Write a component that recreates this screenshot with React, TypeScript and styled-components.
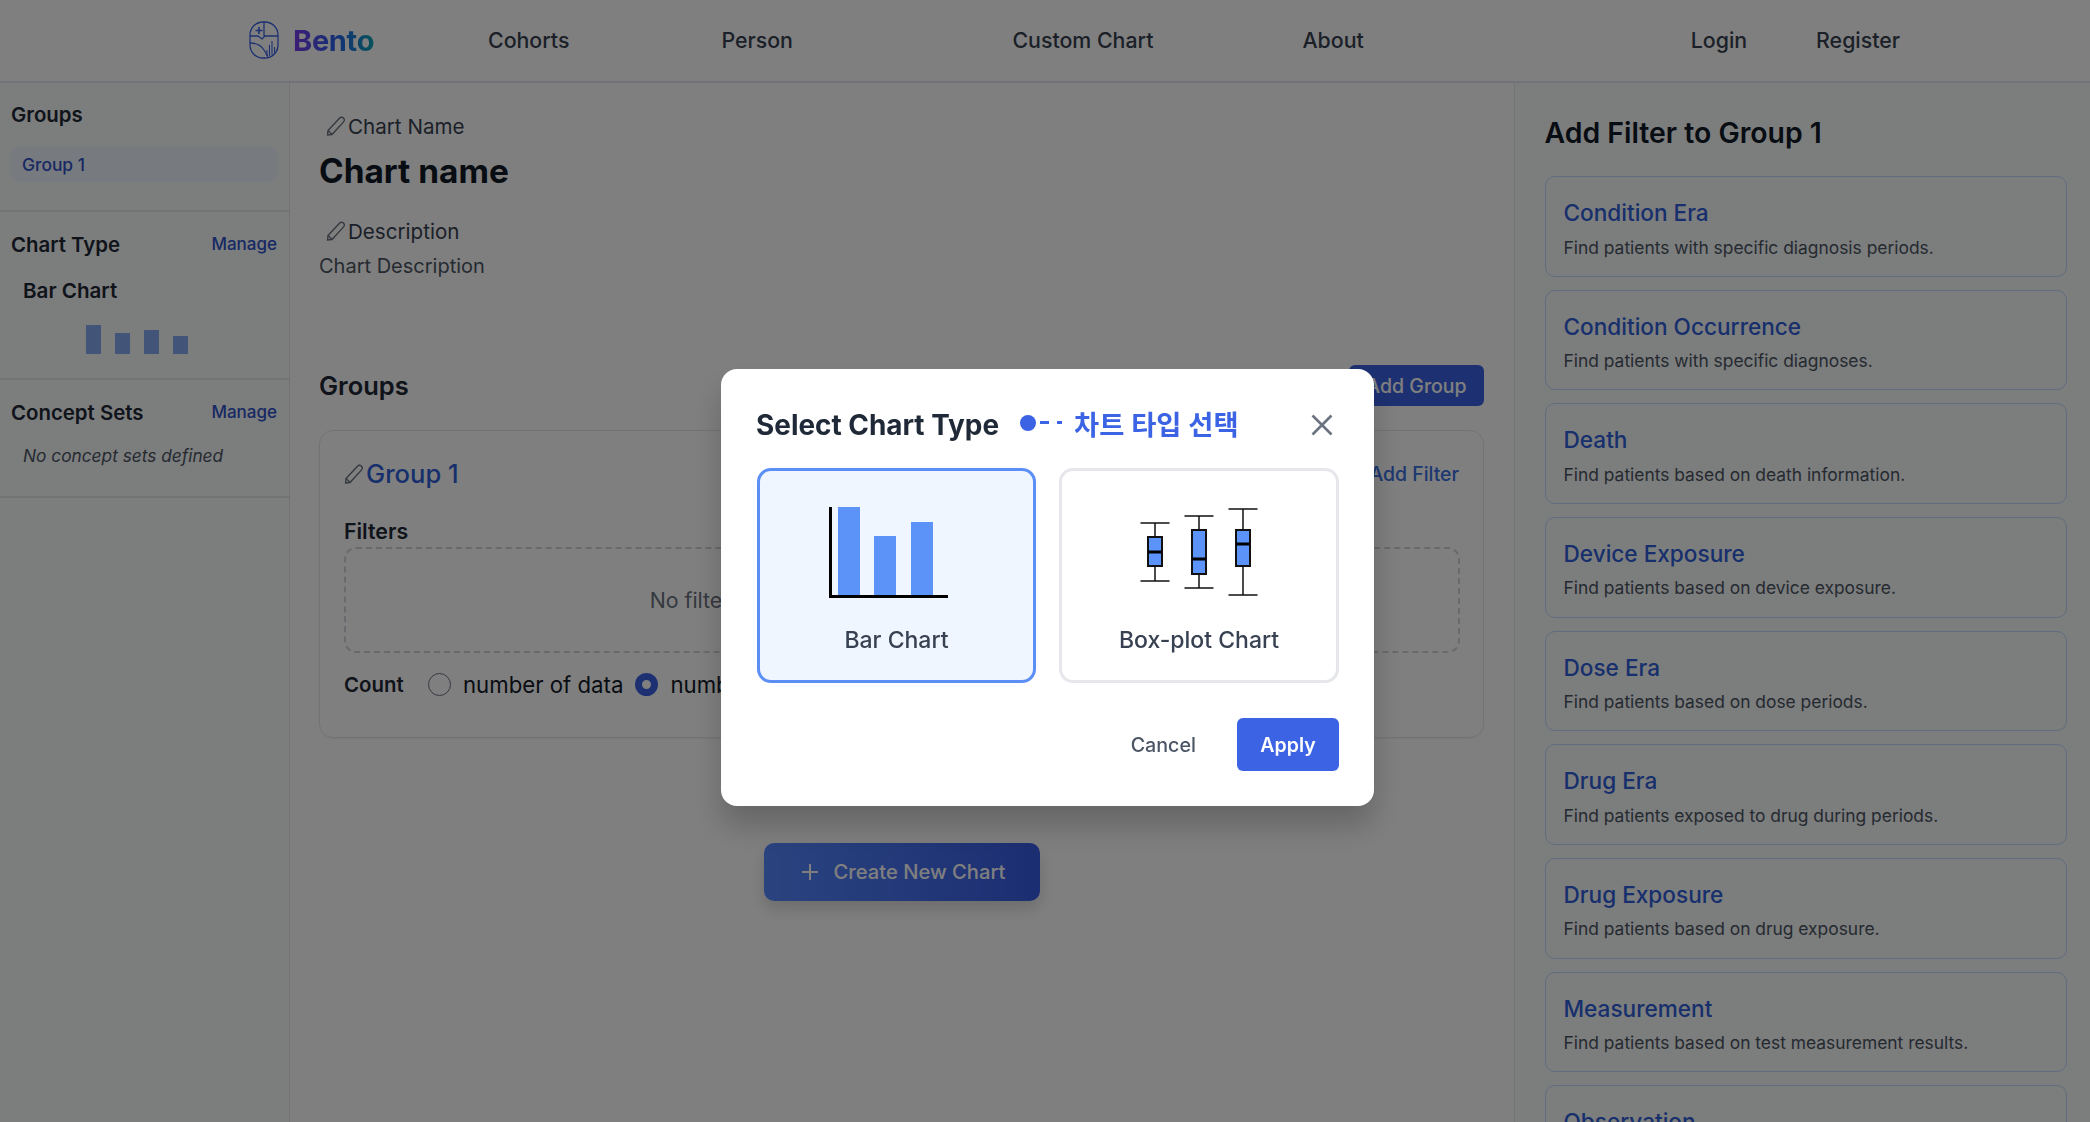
import React from "react";
import styled, { createGlobalStyle } from "styled-components";

const GlobalStyle = createGlobalStyle`
	* { box-sizing: border-box; }
	html, body { margin: 0; padding: 0; height: 100%; overflow: hidden; }
	body {
		font-family: Inter, "Noto Sans CJK KR", "Liberation Sans", sans-serif;
		background: #fff;
		color: #111827;
	}
`;

const Page = styled.div`
	height: 1122px;
	display: flex;
	flex-direction: column;
	overflow: hidden;
`;

const Header = styled.header`
	flex: none;
	height: 83px;
	display: flex;
	align-items: center;
	background: #fff;
	border-bottom: 2px solid #e5e7f0;
	padding: 0 0 1px 249px;
`;

const Brand = styled.div`
	display: flex;
	align-items: center;
	gap: 12px;
	width: 239px;
`;

const BrandName = styled.span`
	font-size: 29px;
	font-weight: 700;
	letter-spacing: -0.3px;
	background: linear-gradient(90deg, #7c3aed, #2563eb 55%, #0ea5b7);
	-webkit-background-clip: text;
	background-clip: text;
	color: transparent;
`;

const NavLink = styled.a<{ $left: number }>`
	font-size: 21.33px;
	font-weight: 500;
	color: #374151;
	margin-left: ${props => props.$left}px;
`;

const Body = styled.div`
	flex: 1;
	min-height: 0;
	display: flex;
`;

const LeftBar = styled.aside`
	flex: none;
	width: 290px;
	background: #f9fafb;
	border-right: 1px solid #e5e7eb;
`;

const SideSection = styled.section<{ $height: number; $top: number }>`
	height: ${props => props.$height}px;
	padding: ${props => props.$top}px 12px 0 11px;
	border-bottom: 2px solid #e5e7eb;
`;

const SideHead = styled.div`
	display: flex;
	align-items: center;
	justify-content: space-between;
	height: 32px;
`;

const SideTitle = styled.h3`
	margin: 0;
	font-size: 20.4px;
	font-weight: 600;
	color: #1f2937;
`;

const ManageLink = styled.a`
	font-size: 17px;
	font-weight: 500;
	color: #2f52c8;
`;

const GroupPill = styled.div`
	margin-top: 17px;
	height: 35px;
	display: flex;
	align-items: center;
	padding-left: 11px;
	border-radius: 8px;
	background: #eff6ff;
	font-size: 17.4px;
	font-weight: 500;
	color: #2f52c8;
`;

const TypeName = styled.div`
	margin: 18px 0 0 12px;
	font-size: 20.6px;
	font-weight: 600;
	color: #1f2937;
`;

const MiniBars = styled.div`
	display: flex;
	align-items: flex-end;
	gap: 14.5px;
	height: 29px;
	margin: 22px 0 0 75px;
`;

const MiniBar = styled.div`
	width: 14.5px;
	background: #86a8f2;
`;

const EmptyNote = styled.div`
	margin: 17px 0 0 12px;
	font-size: 17.3px;
	font-style: italic;
	color: #4b5563;
`;

const Main = styled.main`
	flex: 1;
	min-width: 0;
	padding: 30px 30px 0 29px;
	display: flex;
	flex-direction: column;
`;

const FieldLabel = styled.div`
	display: flex;
	align-items: center;
	height: 26px;
	padding-left: 7px;
	gap: 2px;
	font-size: 20.6px;
	color: #374151;
`;

const ChartTitle = styled.h1`
	margin: 9px 0 0;
	height: 46px;
	line-height: 46px;
	font-size: 33.4px;
	font-weight: 700;
	color: #111827;
`;

const DescriptionLabel = styled(FieldLabel)`
	margin-top: 24px;
`;

const DescriptionText = styled.div`
	margin-top: 9px;
	font-size: 20px;
	line-height: 26px;
	color: #4b5563;
`;

const GroupsRow = styled.div`
	margin-top: 86px;
	height: 41px;
	display: flex;
	align-items: center;
	justify-content: space-between;
`;

const GroupsTitle = styled.h2`
	margin: 0;
	font-size: 25.5px;
	font-weight: 600;
	color: #1f2937;
`;

const AddGroupButton = styled.button`
	width: 135px;
	height: 41px;
	border: none;
	border-radius: 6px;
	background: #3b63e4;
	color: #fff;
	font: 500 19.5px Inter, sans-serif;
`;

const GroupCard = styled.section`
	margin-top: 23.5px;
	height: 308px;
	border: 1.5px solid #e5e7eb;
	border-radius: 14px;
	padding: 21.5px 23px 0 24px;
	box-shadow: 0 1px 2px rgba(0, 0, 0, 0.05);
`;

const GroupCardHead = styled.div`
	display: flex;
	align-items: center;
	justify-content: space-between;
	height: 43px;
`;

const GroupName = styled.div`
	display: flex;
	align-items: center;
	gap: 2px;
	font-size: 25.6px;
	font-weight: 500;
	color: #2f5fd8;
`;

const AddFilterLink = styled.a`
	font-size: 19.4px;
	font-weight: 500;
	color: #3b6fe0;
	margin-right: 1px;
`;

const FiltersLabel = styled.div`
	margin-top: 23px;
	font-size: 21.33px;
	line-height: 26px;
	font-weight: 600;
	color: #1f2937;
`;

const DropZone = styled.div`
	margin-top: 3px;
	height: 106px;
	border: 2px dashed #d1d5db;
	border-radius: 12px;
	display: flex;
	align-items: center;
	justify-content: center;
	font-size: 21.33px;
	color: #6b7280;
`;

const CountRow = styled.div`
	margin-top: 18px;
	height: 26px;
	display: flex;
	align-items: center;
	font-size: 22.2px;
	color: #111827;
`;

const CountLabel = styled.span`
	width: 84px;
	font-size: 20.4px;
	font-weight: 600;
	color: #1f2937;
`;

const Radio = styled.span<{ $on?: boolean }>`
	flex: none;
	width: 23px;
	height: 23px;
	border-radius: 50%;
	margin-right: 12px;
	background: #fff;
	border: ${props => (props.$on ? "7px solid #3b63e4" : "1.5px solid #6b7280")};
`;

const RadioText = styled.span`
	margin-right: 12px;
`;

const CreateButton = styled.button`
	align-self: center;
	margin-top: 105px;
	width: 276px;
	height: 58px;
	display: flex;
	align-items: center;
	justify-content: center;
	gap: 14px;
	padding: 0 0 0 4px;
	border: none;
	border-radius: 10px;
	background: linear-gradient(90deg, #5588ff, #385ce4);
	color: #fff;
	font: 500 20.2px Inter, sans-serif;
	box-shadow: 0 8px 16px rgba(0, 0, 0, 0.15);
`;

const RightBar = styled.aside`
	flex: none;
	width: 576px;
	background: #f9fafb;
	border-left: 1px solid #e5e7eb;
	padding: 30px 23px 0 29.5px;
	display: flex;
	flex-direction: column;
	gap: 13px;
`;

const RightTitle = styled.h2`
	margin: 0 0 10px;
	height: 40px;
	line-height: 40px;
	font-size: 28.4px;
	font-weight: 600;
	color: #111827;
`;

const FilterCard = styled.div`
	flex: none;
	height: 100.67px;
	border: 1.5px solid #bfdbfe;
	border-radius: 10px;
	padding: 20px 18px 0;
`;

const FilterName = styled.div`
	font-size: 22.6px;
	line-height: 32px;
	font-weight: 500;
	color: #2f5fd8;
`;

const FilterDesc = styled.div`
	margin-top: 5.5px;
	font-size: 17.4px;
	line-height: 26px;
	color: #4b5563;
`;

const Backdrop = styled.div`
	position: fixed;
	inset: 0;
	background: rgba(0, 0, 0, 0.5);
`;

const Modal = styled.div`
	position: fixed;
	left: 721px;
	top: 369px;
	width: 653px;
	height: 437px;
	padding: 36px 35px 0 36px;
	background: #fff;
	border-radius: 16px;
	box-shadow: 0 20px 30px rgba(0, 0, 0, 0.2);
`;

const ModalHead = styled.div`
	height: 39px;
	display: flex;
	align-items: center;
`;

const ModalTitle = styled.h2`
	margin: 0 0 0 -1px;
	font-size: 27.9px;
	font-weight: 700;
	color: #1f2937;
`;

const Callout = styled.div`
	display: flex;
	align-items: center;
	margin: -4px 0 0 21px;
	color: #3b63e4;
	font-size: 27.3px;
	font-weight: 600;
`;

const CalloutDot = styled.span`
	width: 16px;
	height: 16px;
	border-radius: 50%;
	background: #3b63e4;
`;

const CalloutDash = styled.span`
	width: 9px;
	height: 3px;
	margin-left: 4px;
	background: #3b63e4;
`;

const CalloutSpeck = styled.span`
	width: 5px;
	height: 3px;
	margin: 0 12px 0 8px;
	background: #3b63e4;
`;

const CloseButton = styled.button`
	margin-left: auto;
	margin-right: 6px;
	padding: 0;
	border: none;
	background: none;
	display: flex;
`;

const TypeGrid = styled.div`
	margin-top: 24px;
	display: grid;
	grid-template-columns: 279px 280px;
	gap: 23px;
`;

const TypeCard = styled.div<{ $active?: boolean }>`
	height: 215px;
	border-radius: 14px;
	border: 3px solid ${props => (props.$active ? "#5b8ff5" : "#e5e7eb")};
	background: ${props => (props.$active ? "#eff6ff" : "#fff")};
	display: flex;
	flex-direction: column;
	align-items: center;
	padding-top: 36px;
`;

const TypeLabel = styled.div`
	margin-top: 27px;
	font-size: 23px;
	line-height: 28px;
	font-weight: 500;
	color: #374151;
`;

const BarArt = styled.svg`
	margin-right: 16px;
`;

const BoxArt = styled.svg`
	margin: 1px 0 -1px;
`;

const ModalFoot = styled.div`
	margin-top: 35px;
	display: flex;
	align-items: center;
	justify-content: flex-end;
`;

const CancelButton = styled.button`
	border: none;
	background: none;
	padding: 0;
	margin-right: 41px;
	font: 500 19.7px Inter, sans-serif;
	color: #4b5563;
`;

const ApplyButton = styled.button`
	width: 102px;
	height: 53px;
	border: none;
	border-radius: 6px;
	background: #3b63e4;
	color: #fff;
	font: 600 19.5px Inter, sans-serif;
`;

const filters = [
	["Condition Era", "Find patients with specific diagnosis periods."],
	["Condition Occurrence", "Find patients with specific diagnoses."],
	["Death", "Find patients based on death information."],
	["Device Exposure", "Find patients based on device exposure."],
	["Dose Era", "Find patients based on dose periods."],
	["Drug Era", "Find patients exposed to drug during periods."],
	["Drug Exposure", "Find patients based on drug exposure."],
	["Measurement", "Find patients based on test measurement results."],
	["Observation", "Find patients based on observations."],
];

const Logo = () => (
	<svg width="32" height="38" viewBox="0 0 32 38" fill="none" stroke="#3b63e4" strokeWidth="1.3">
		<rect x="1" y="1" width="28" height="36" rx="13" />
		<path d="M15 1V15M1 15H9L13 18L16 15H29" />
		<path d="M10 6V13M6.5 9.5H13.5" strokeWidth="1.6" />
		<path d="M1 22C6 22 12 24 15 29C17 32 18 34 19 36" />
		<path d="M18 29V35M20.5 24V35M23 20V34M25.5 26V32M28 28V30" strokeWidth="1.1" />
	</svg>
);

const Pencil = () => (
	<svg width="20" height="20" viewBox="0 0 20 20" fill="none" stroke="#6b7280" strokeWidth="1.4">
		<path d="M2 14.5L13.5 2.2C14.6 1 16.2 0.9 17.4 2C18.6 3.1 18.7 4.7 17.6 5.9L6 18.5L1.6 19L2 14.5Z" />
		<path d="M2.2 14.6L6 18.4" />
	</svg>
);

const CloseIcon = () => (
	<svg width="22" height="22" viewBox="0 0 22 22" fill="none" stroke="#6b7280" strokeWidth="2.6">
		<path d="M1.5 1.5L20.5 20.5M20.5 1.5L1.5 20.5" />
	</svg>
);

const PlusIcon = () => (
	<svg width="18" height="18" viewBox="0 0 18 18" fill="none" stroke="currentColor" strokeWidth="2">
		<path d="M9 1V17M1 9H17" />
	</svg>
);

const BarChartArt = () => (
	<BarArt width="120" height="92" viewBox="0 0 120 92">
		<rect x="9" y="0" width="22" height="88" fill="#5b93f9" />
		<rect x="45" y="29" width="22" height="59" fill="#5b93f9" />
		<rect x="82" y="15" width="22" height="73" fill="#5b93f9" />
		<path d="M1.5 0V89.5H119" fill="none" stroke="#000" strokeWidth="3" />
	</BarArt>
);

const boxes = [
	{ x: 15, top: 15, low: 73, boxTop: 29, boxBottom: 58, mid: 44 },
	{ x: 59, top: 8, low: 80, boxTop: 22, boxBottom: 66, mid: 51 },
	{ x: 103, top: 1, low: 87, boxTop: 22, boxBottom: 58, mid: 36 },
];

const BoxPlotArt = () => (
	<BoxArt width="118" height="92" viewBox="0 0 118 92">
		{boxes.map(b => (
			<g key={b.x} fill="none" stroke="#111" strokeWidth="1.5">
				<path d={`M${b.x - 14.5} ${b.top}H${b.x + 14.5}M${b.x - 14.5} ${b.low}H${b.x + 14.5}M${b.x} ${b.top}V${b.low}`} />
				<rect x={b.x - 7} y={b.boxTop} width="14" height={b.boxBottom - b.boxTop} fill="#5b93f9" strokeWidth="2" />
				<path d={`M${b.x - 7} ${b.mid}H${b.x + 7}`} stroke="#000" strokeWidth="3" />
			</g>
		))}
	</BoxArt>
);

const miniBars = [29, 21, 24, 18];

const App = () => {
	return (
		<Page>
			<GlobalStyle />
			<Header>
				<Brand>
					<Logo />
					<BrandName>Bento</BrandName>
				</Brand>
				<NavLink $left={0}>Cohorts</NavLink>
				<NavLink $left={152}>Person</NavLink>
				<NavLink $left={219.5}>Custom Chart</NavLink>
				<NavLink $left={149}>About</NavLink>
				<NavLink $left={327}>Login</NavLink>
				<NavLink $left={69}>Register</NavLink>
			</Header>
			<Body>
				<LeftBar>
					<SideSection $height={129} $top={15}>
						<SideHead>
							<SideTitle>Groups</SideTitle>
						</SideHead>
						<GroupPill>Group 1</GroupPill>
					</SideSection>
					<SideSection $height={168} $top={16}>
						<SideHead>
							<SideTitle>Chart Type</SideTitle>
							<ManageLink>Manage</ManageLink>
						</SideHead>
						<TypeName>Bar Chart</TypeName>
						<MiniBars>
							{miniBars.map((height, i) => (
								<MiniBar key={i} style={{ height }} />
							))}
						</MiniBars>
					</SideSection>
					<SideSection $height={118} $top={16}>
						<SideHead>
							<SideTitle>Concept Sets</SideTitle>
							<ManageLink>Manage</ManageLink>
						</SideHead>
						<EmptyNote>No concept sets defined</EmptyNote>
					</SideSection>
				</LeftBar>
				<Main>
					<FieldLabel>
						<Pencil />
						Chart Name
					</FieldLabel>
					<ChartTitle>Chart name</ChartTitle>
					<DescriptionLabel>
						<Pencil />
						Description
					</DescriptionLabel>
					<DescriptionText>Chart Description</DescriptionText>
					<GroupsRow>
						<GroupsTitle>Groups</GroupsTitle>
						<AddGroupButton>Add Group</AddGroupButton>
					</GroupsRow>
					<GroupCard>
						<GroupCardHead>
							<GroupName>
								<Pencil />
								Group 1
							</GroupName>
							<AddFilterLink>Add Filter</AddFilterLink>
						</GroupCardHead>
						<FiltersLabel>Filters</FiltersLabel>
						<DropZone>No filters added. Please select a filter on the right.</DropZone>
						<CountRow>
							<CountLabel>Count</CountLabel>
							<Radio />
							<RadioText>number of data</RadioText>
							<Radio $on />
							<RadioText>number of patients</RadioText>
						</CountRow>
					</GroupCard>
					<CreateButton>
						<PlusIcon />
						Create New Chart
					</CreateButton>
				</Main>
				<RightBar>
					<RightTitle>Add Filter to Group 1</RightTitle>
					{filters.map(([name, desc]) => (
						<FilterCard key={name}>
							<FilterName>{name}</FilterName>
							<FilterDesc>{desc}</FilterDesc>
						</FilterCard>
					))}
				</RightBar>
			</Body>
			<Backdrop />
			<Modal>
				<ModalHead>
					<ModalTitle>Select Chart Type</ModalTitle>
					<Callout>
						<CalloutDot />
						<CalloutDash />
						<CalloutSpeck />
						차트 타입 선택
					</Callout>
					<CloseButton>
						<CloseIcon />
					</CloseButton>
				</ModalHead>
				<TypeGrid>
					<TypeCard $active>
						<BarChartArt />
						<TypeLabel>Bar Chart</TypeLabel>
					</TypeCard>
					<TypeCard>
						<BoxPlotArt />
						<TypeLabel>Box-plot Chart</TypeLabel>
					</TypeCard>
				</TypeGrid>
				<ModalFoot>
					<CancelButton>Cancel</CancelButton>
					<ApplyButton>Apply</ApplyButton>
				</ModalFoot>
			</Modal>
		</Page>
	);
};

export default App;
